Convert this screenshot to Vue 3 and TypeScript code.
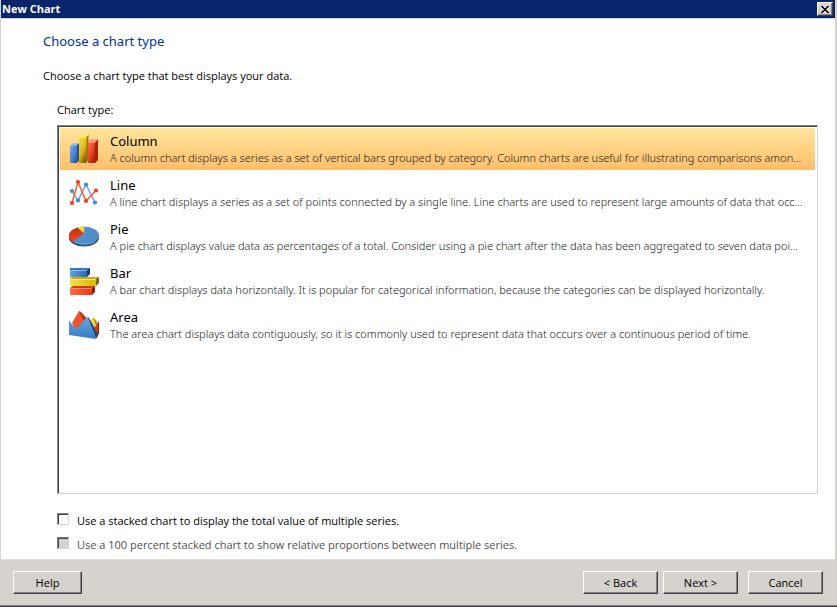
<script setup lang="ts">
import { ref } from 'vue'

type ChartId = 'column' | 'line' | 'pie' | 'bar' | 'area'

interface ChartType {
  id: ChartId
  name: string
  description: string
}

const chartTypes: ChartType[] = [
  {
    id: 'column',
    name: 'Column',
    description:
      'A column chart displays a series as a set of vertical bars grouped by category. Column charts are useful for illustrating comparisons amon...',
  },
  {
    id: 'line',
    name: 'Line',
    description:
      'A line chart displays a series as a set of points connected by a single line. Line charts are used to represent large amounts of data that occ...',
  },
  {
    id: 'pie',
    name: 'Pie',
    description:
      'A pie chart displays value data as percentages of a total. Consider using a pie chart after the data has been aggregated to seven data poi...',
  },
  {
    id: 'bar',
    name: 'Bar',
    description:
      'A bar chart displays data horizontally. It is popular for categorical information, because the categories can be displayed horizontally.',
  },
  {
    id: 'area',
    name: 'Area',
    description:
      'The area chart displays data contiguously, so it is commonly used to represent data that occurs over a continuous period of time.',
  },
]

const selected = ref<ChartId>('column')
const stacked = ref(false)
const fullStacked = ref(false)
</script>

<template>
  <div class="dialog">
    <header class="titlebar">
      <span>New Chart</span>
      <button class="close" type="button" aria-label="Close">
        <svg viewBox="0 0 8 7" shape-rendering="crispEdges" aria-hidden="true">
          <path
            d="M0 0h2v1h-2zM6 0h2v1h-2zM1 1h2v1h-2zM5 1h2v1h-2zM2 2h4v1h-4zM3 3h2v1h-2zM2 4h4v1h-4zM1 5h2v1h-2zM5 5h2v1h-2zM0 6h2v1h-2zM6 6h2v1h-2z"
          />
        </svg>
      </button>
    </header>

    <main class="content">
      <h1>Choose a chart type</h1>
      <p class="intro">Choose a chart type that best displays your data.</p>

      <section class="chooser">
        <div id="type-label" class="list-label">Chart type:</div>
        <div class="list" role="radiogroup" aria-labelledby="type-label">
          <label
            v-for="chart in chartTypes"
            :key="chart.id"
            class="item"
            :class="{ selected: selected === chart.id }"
          >
            <input v-model="selected" class="choice" type="radio" name="chart-type" :value="chart.id" />
            <svg v-if="chart.id === 'column'" class="icon" viewBox="0 0 32 32" aria-hidden="true">
              <defs>
                <linearGradient id="col-blue" x1="0" y1="0" x2="1" y2="1">
                  <stop offset="0" stop-color="#72b0ee" />
                  <stop offset="0.6" stop-color="#3f7fcc" />
                  <stop offset="1" stop-color="#224a80" />
                </linearGradient>
                <linearGradient id="col-yellow" x1="0" y1="0" x2="0.6" y2="1">
                  <stop offset="0" stop-color="#f8e044" />
                  <stop offset="0.6" stop-color="#dcb71e" />
                  <stop offset="1" stop-color="#806408" />
                </linearGradient>
                <linearGradient id="col-red" x1="0" y1="0" x2="0.8" y2="1">
                  <stop offset="0" stop-color="#ff7350" />
                  <stop offset="0.6" stop-color="#e4401e" />
                  <stop offset="1" stop-color="#982008" />
                </linearGradient>
              </defs>
              <path d="M2 13 5 10.3H11L8 13z" fill="#8abbe9" />
              <path d="M8 13 11 10.3V28L8 30z" fill="#245695" />
              <path d="M2 13h7v17H2z" fill="url(#col-blue)" />
              <path d="M11 5 14 1.3h6.5L18 5z" fill="#ffea68" />
              <path d="M18 5 20.5 1.5V27l-2.5 3z" fill="#9b7903" />
              <path d="M11 5h7.5v25H11z" fill="url(#col-yellow)" />
              <path d="M20 9.5 22.5 6.3H30L27 9.5z" fill="#ff9376" />
              <path d="M27 9.5 30 6.5V27l-3 3z" fill="#a51e05" />
              <path d="M20 9.5h7V30h-7z" fill="url(#col-red)" />
            </svg>
            <svg v-else-if="chart.id === 'line'" class="icon" viewBox="0 0 32 32" aria-hidden="true">
              <path d="M4 14 10 23.5 18 7.5 27 25.5" fill="none" stroke="#64a0d8" stroke-width="1.4" />
              <path d="M4 26 10 5 18 24 28 13.5" fill="none" stroke="#f2542c" stroke-width="1.4" />
              <g fill="#428bcb">
                <circle cx="4" cy="14" r="2.1" />
                <circle cx="10" cy="23.5" r="2.1" />
                <circle cx="18" cy="7.5" r="2.1" />
                <circle cx="27" cy="25.5" r="2.1" />
              </g>
              <g fill="#f43f14">
                <circle cx="4" cy="26" r="2.1" />
                <circle cx="10" cy="5" r="2.1" />
                <circle cx="18" cy="24" r="2.1" />
                <circle cx="28" cy="13.5" r="2.1" />
              </g>
            </svg>
            <svg v-else-if="chart.id === 'pie'" class="icon" viewBox="0 0 32 32" aria-hidden="true">
              <defs>
                <linearGradient id="pie-red" x1="0" y1="0" x2="0" y2="1">
                  <stop offset="0" stop-color="#bd2d10" />
                  <stop offset="1" stop-color="#f4491e" />
                </linearGradient>
              </defs>
              <ellipse cx="16" cy="16.8" rx="15" ry="8.7" fill="#235386" />
              <path d="M1 14v3c0 2 2 4 4 5v-3z" fill="#a92a10" />
              <ellipse cx="16" cy="14.4" rx="15" ry="8.8" fill="#528dca" />
              <path d="M16 12.3 5.3 20.5C2.5 19 1 16.8 1 14.4 1 11.2 4.5 8.4 9.8 6.4z" fill="url(#pie-red)" />
              <path d="M16 12.3 9.4 6.8Q12.7 5.7 16.3 5.6z" fill="#f4d33b" />
              <path d="M5.8 20.3C11 23.9 21 24.1 26.8 20.7" fill="none" stroke="#8dbee8" stroke-width=".8" />
            </svg>
            <svg v-else-if="chart.id === 'bar'" class="icon" viewBox="0 0 32 32" aria-hidden="true">
              <defs>
                <linearGradient id="bar-blue" x1="0" y1="0" x2="1" y2="0">
                  <stop offset="0" stop-color="#64a1e0" />
                  <stop offset="1" stop-color="#2c69b6" />
                </linearGradient>
                <linearGradient id="bar-yellow" x1="0" y1="0" x2="1" y2="0">
                  <stop offset="0" stop-color="#f8e044" />
                  <stop offset="1" stop-color="#d7b910" />
                </linearGradient>
                <linearGradient id="bar-red" x1="0" y1="0" x2="1" y2="0">
                  <stop offset="0" stop-color="#ff6844" />
                  <stop offset="1" stop-color="#e43a18" />
                </linearGradient>
              </defs>
              <path d="M2 23 5 21h22l-3 2z" fill="#d63816" />
              <path d="M24 23 27 21v6l-3 3z" fill="#8c1b05" />
              <path d="M2 23h22v7H2z" fill="url(#bar-red)" />
              <path d="M2.5 23.5h21" stroke="#ff8d70" />
              <path d="M2 5V3h20l-3 2z" fill="#3476c5" />
              <path d="M19 5 22 3v6l-3 3z" fill="#173f70" />
              <path d="M2 5h17v7H2z" fill="url(#bar-blue)" />
              <path d="M2.5 5.5h16" stroke="#8abfee" />
              <path d="M2 14 4 12h27l-3 2z" fill="#cdab10" />
              <path d="M28 14 31 12v6l-3 3z" fill="#806300" />
              <path d="M2 14h26v7H2z" fill="url(#bar-yellow)" />
              <path d="M2.5 14.5h25" stroke="#ffed67" />
            </svg>
            <svg v-else class="icon" viewBox="0 0 32 32" aria-hidden="true">
              <defs>
                <linearGradient id="area-blue" x1="0" y1="0" x2="0" y2="1">
                  <stop offset="0" stop-color="#6ba5de" />
                  <stop offset="1" stop-color="#347cc6" />
                </linearGradient>
              </defs>
              <path d="M4 14 11 2 18.5 10 10 22 7 20z" fill="#ef552d" />
              <path d="M11 2 13 3 19 9.5 16 13z" fill="#b83317" />
              <path d="M21 13 25 8.7 29 15 27 21z" fill="#f7d83d" />
              <path d="M25 8.7 26.5 9.4 30 14.5 28 17z" fill="#b79012" />
              <path d="M26 19 31 12.7V25l-4 2z" fill="#dd3d19" />
              <path d="M29.7 14.3 31 12.7V25h-1.3z" fill="#982109" />
              <path d="M19.3 7.7 21 9 30.5 26 28 30z" fill="#1e477b" />
              <path d="M1 11.5 8 20 19.3 7.7 28 30 1 26z" fill="url(#area-blue)" />
            </svg>
            <span class="text">
              <span class="name">{{ chart.name }}</span>
              <span class="description">{{ chart.description }}</span>
            </span>
          </label>
        </div>

        <div class="options">
          <label class="option">
            <input v-model="stacked" type="checkbox" />
            <span>Use a stacked chart to display the total value of multiple series.</span>
          </label>
          <label class="option disabled">
            <input v-model="fullStacked" type="checkbox" :disabled="!stacked" />
            <span>Use a 100 percent stacked chart to show relative proportions between multiple series.</span>
          </label>
        </div>
      </section>
    </main>

    <footer class="footer">
      <button class="push help" type="button">Help</button>
      <div class="steps">
        <button class="push" type="button">&lt; Back</button>
        <button class="push" type="button">Next &gt;</button>
      </div>
      <button class="push" type="button">Cancel</button>
    </footer>
  </div>
</template>

<style>
body {
  margin: 0;
  background: #d6d3ce;
}
</style>

<style scoped>
.dialog {
  box-sizing: border-box;
  display: flex;
  flex-direction: column;
  min-height: 100vh;
  padding: 0 2px 0 1px;
  border-bottom: 1px solid #404040;
  box-shadow: inset 0 -1px 0 #848284;
  background: #d6d3ce;
  color: #000;
  font: 11px/16px 'Open Sans', 'Noto Sans', sans-serif;
}

.titlebar {
  box-sizing: border-box;
  display: flex;
  align-items: center;
  justify-content: space-between;
  height: 19px;
  padding: 0 2px 0 1px;
  border-bottom: 1px solid #d6d3ce;
  background: #08246b;
  color: #fff;
  font-weight: 700;
}

.close {
  box-sizing: border-box;
  display: flex;
  align-items: center;
  justify-content: center;
  width: 16px;
  height: 14px;
  padding: 0;
  border: 1px solid;
  border-color: #fff #404040 #404040 #fff;
  box-shadow: inset -1px -1px 0 #848284;
  background: #d6d3ce;
}

.close svg {
  width: 8px;
  height: 7px;
}

.content {
  flex: 1;
  display: flex;
  flex-direction: column;
  padding: 12px 17px 6px 42px;
  border-bottom: 1px solid #e2e0dd;
  background: #fff;
}

h1 {
  margin: 0;
  color: #003399;
  font-family: 'Noto Sans', 'Open Sans', sans-serif;
  font-size: 13px;
  font-weight: 400;
  line-height: 20px;
}

.intro {
  margin: 17px 0 18px;
}

.chooser {
  flex: 1;
  display: flex;
  flex-direction: column;
  padding-left: 14px;
}

.list-label {
  margin-bottom: 7px;
}

.list {
  flex: 1;
  display: flex;
  flex-direction: column;
  gap: 2px;
  padding: 2px 2px 1px;
  border: 1px solid;
  border-color: #848284 #d6d3ce #d6d3ce #848284;
  box-shadow: inset 1px 1px 0 #404040;
}

.item {
  position: relative;
  display: flex;
  align-items: center;
  gap: 10px;
  height: 42px;
  padding: 0 8px;
}

.item.selected {
  background: linear-gradient(#ffe59c, #ffbe6b);
}

.choice {
  position: absolute;
  inset: 0;
  margin: 0;
  opacity: 0;
}

.icon {
  flex: none;
  width: 32px;
  height: 32px;
}

.text {
  display: flex;
  flex: 1;
  flex-direction: column;
  min-width: 0;
}

.name {
  font-family: 'Noto Sans', 'Open Sans', sans-serif;
  font-size: 13px;
  line-height: 18px;
}

.description {
  overflow: hidden;
  color: #202020;
  font-family: 'Noto Sans', 'Open Sans', sans-serif;
  font-weight: 300;
  text-overflow: ellipsis;
  white-space: nowrap;
}

.options {
  display: flex;
  flex-direction: column;
  gap: 8px;
  padding-top: 19px;
}

.option {
  display: flex;
  align-items: flex-start;
  gap: 8px;
}

.option input {
  appearance: none;
  box-sizing: border-box;
  width: 12px;
  height: 12px;
  margin: 0;
  border: 1px solid;
  border-color: #848284 #d6d3ce #d6d3ce #848284;
  box-shadow: inset 1px 1px 0 #404040;
  background: #fff;
}

.option input:checked {
  background: #404040;
}

.option input:disabled {
  background: #d6d3ce;
}

.option.disabled {
  color: #525052;
}

.footer {
  display: flex;
  align-items: center;
  gap: 10px;
  padding: 11px 12px 12px;
}

.steps {
  display: flex;
  gap: 5px;
  margin-left: auto;
}

.push {
  box-sizing: border-box;
  width: 75px;
  height: 23px;
  padding: 0;
  border: 1px solid;
  border-color: #fff #404040 #404040 #fff;
  box-shadow: inset -1px -1px 0 #848284;
  background: #d6d3ce;
  color: #000;
  font: inherit;
}

.help {
  width: 69px;
}
</style>
